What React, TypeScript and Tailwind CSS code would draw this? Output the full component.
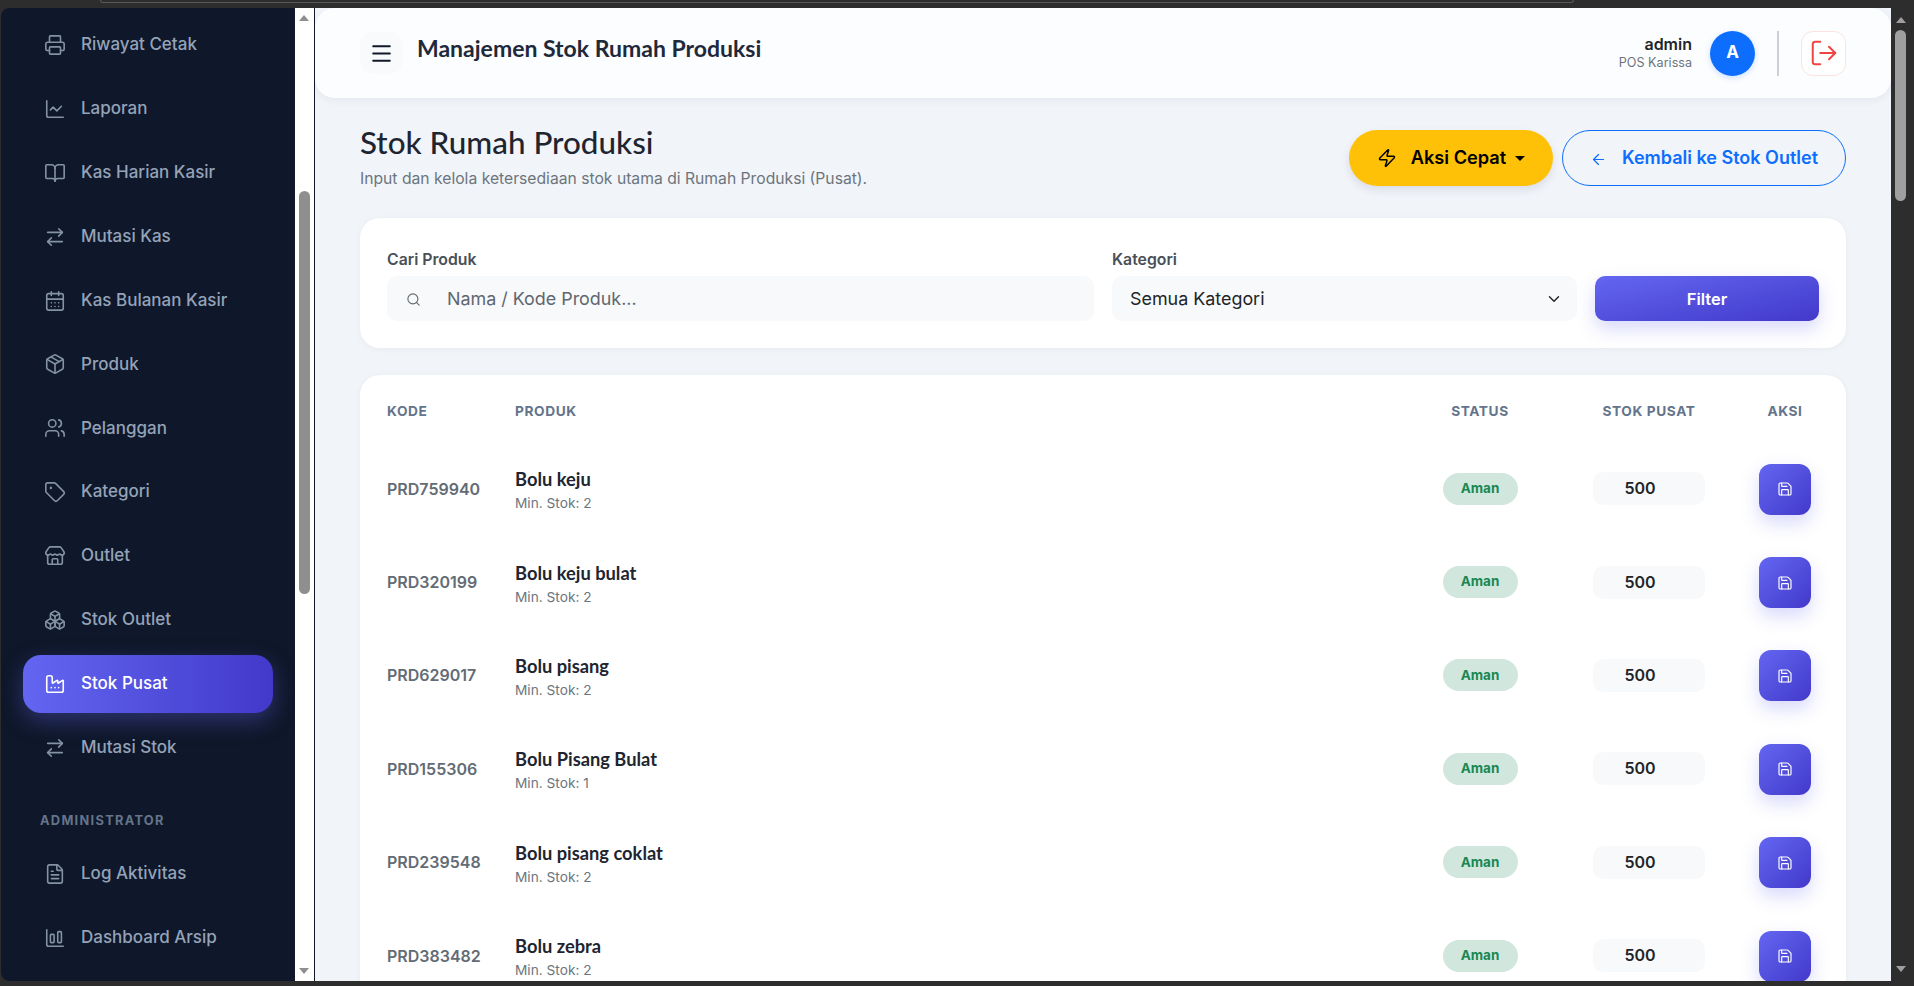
import React from 'react';
import {
  ArrowLeft, ArrowRightLeft, BookOpen, Boxes, CalendarDays, ChartColumnBig, ChartLine, ChevronDown,
  Factory, FileText, LogOut, Menu, Package, Printer, Save, Search, Store, Tag, Users, Zap,
} from 'lucide-react';

const menuUtama = [
  { label: 'Riwayat Cetak', icon: Printer },
  { label: 'Laporan', icon: ChartLine },
  { label: 'Kas Harian Kasir', icon: BookOpen },
  { label: 'Mutasi Kas', icon: ArrowRightLeft },
  { label: 'Kas Bulanan Kasir', icon: CalendarDays },
  { label: 'Produk', icon: Package },
  { label: 'Pelanggan', icon: Users },
  { label: 'Kategori', icon: Tag },
  { label: 'Outlet', icon: Store },
  { label: 'Stok Outlet', icon: Boxes },
  { label: 'Stok Pusat', icon: Factory, active: true },
  { label: 'Mutasi Stok', icon: ArrowRightLeft },
];

const menuAdmin = [
  { label: 'Log Aktivitas', icon: FileText },
  { label: 'Dashboard Arsip', icon: ChartColumnBig },
];

const produk = [
  { kode: 'PRD759940', nama: 'Bolu keju', min: 2 },
  { kode: 'PRD320199', nama: 'Bolu keju bulat', min: 2 },
  { kode: 'PRD629017', nama: 'Bolu pisang', min: 2 },
  { kode: 'PRD155306', nama: 'Bolu Pisang Bulat', min: 1 },
  { kode: 'PRD239548', nama: 'Bolu pisang coklat', min: 2 },
  { kode: 'PRD383482', nama: 'Bolu zebra', min: 2 },
];

const SideItem = ({ label, icon: Icon, active }: { label: string; icon: React.ElementType; active?: boolean }) => (
  <div
    className={`flex h-[58px] items-center gap-[15px] rounded-[18px] pl-[21px] text-[17px] font-medium ${
      active
        ? 'bg-gradient-to-r from-[#6366f1] to-[#4338ca] text-white shadow-[0_8px_22px_rgba(99,102,241,0.35)]'
        : 'text-[#94a3b8]'
    }`}
  >
    <Icon size={22} strokeWidth={1.75} className={active ? 'text-white' : 'text-[#8492a6]'} />
    <span>{label}</span>
  </div>
);

const ArrowUp = ({ color }: { color: string }) => (
  <svg width="10" height="6" viewBox="0 0 10 6" className={color}>
    <path d="M5 0 10 6H0Z" fill="currentColor" />
  </svg>
);

const ArrowDown = ({ color }: { color: string }) => (
  <svg width="10" height="6" viewBox="0 0 10 6" className={color}>
    <path d="M0 0H10L5 6Z" fill="currentColor" />
  </svg>
);

const Sidebar = () => (
  <>
    <aside className="h-full w-[294px] shrink-0 overflow-hidden rounded-l-lg bg-[#0f172a] px-[22px] pt-[8px]">
      <div className="flex flex-col gap-[5.9px]">
        {menuUtama.map((m) => (
          <SideItem key={m.label} {...m} />
        ))}
      </div>
      <div className="flex h-[68px] items-end pb-[15px] pl-[17px] text-[12.8px] font-bold tracking-[1.3px] text-[#64748b]">
        ADMINISTRATOR
      </div>
      <div className="flex flex-col gap-[5.9px]">
        {menuAdmin.map((m) => (
          <SideItem key={m.label} {...m} />
        ))}
      </div>
    </aside>
    <div className="flex h-full w-[20px] shrink-0 flex-col items-center border-r border-[#111827] bg-white">
      <div className="flex h-[16px] items-center justify-center pr-[1px] pt-[4px]">
        <ArrowUp color="text-[#8f8f8f]" />
      </div>
      <div className="mr-[1px] mt-[167px] h-[403px] w-[11px] rounded-full bg-[#8f8f8f]" />
      <div className="flex-1" />
      <div className="flex h-[20px] items-center justify-center pr-[1px]">
        <ArrowDown color="text-[#8f8f8f]" />
      </div>
    </div>
  </>
);

const Header = () => (
  <header className="flex h-[90px] items-center justify-between rounded-[20px] bg-[#fcfdff] pl-[45px] pr-[45px] shadow-[0_2px_8px_rgba(15,23,42,0.06)]">
    <div className="flex items-center gap-[14px]">
      <button className="flex h-[42px] w-[43px] items-center justify-center rounded-[14px] bg-[#f8fafc] text-[#111827]">
        <Menu size={25} strokeWidth={1.8} />
      </button>
      <h1 className="mb-[9px] font-[Lato,sans-serif] text-[23px] font-bold text-[#1e293b]">Manajemen Stok Rumah Produksi</h1>
    </div>
    <div className="flex items-center">
      <div className="text-right">
        <div className="text-[16px] font-semibold leading-[20px] text-[#212529]">admin</div>
        <div className="text-[12.6px] leading-[18px] text-[#6c757d]">POS Karissa</div>
      </div>
      <div className="ml-[18px] flex h-[45px] w-[45px] items-center justify-center rounded-full bg-[#0d6efd] text-[17px] font-bold text-white shadow-[0_2px_6px_rgba(13,110,253,0.2)]">
        A
      </div>
      <div className="ml-[22px] h-[45px] w-[2px] bg-[#cbd0d6]" />
      <button className="ml-[22px] flex h-[45px] w-[45px] items-center justify-center rounded-[12px] border border-[#fde2e2] bg-white text-[#ef4444]">
        <LogOut size={30} strokeWidth={1.6} />
      </button>
    </div>
  </header>
);

const JudulHalaman = () => (
  <div className="mt-[32px] flex h-[56px] items-center justify-between px-[45px]">
    <div>
      <h2 className="-mt-[3px] font-[Lato,sans-serif] text-[31.4px] font-medium leading-[36px] text-[#1e2530]">Stok Rumah Produksi</h2>
      <p className="mt-[9px] text-[15.7px] leading-[20px] text-[#6c757d]">
        Input dan kelola ketersediaan stok utama di Rumah Produksi (Pusat).
      </p>
    </div>
    <div className="flex gap-[9px]">
      <button className="flex h-[56px] w-[204px] items-center justify-center rounded-full bg-[#ffc107] text-[18.2px] font-semibold text-black shadow-[0_4px_10px_rgba(15,23,42,0.1)]">
        <Zap size={20} strokeWidth={1.75} />
        <span className="ml-[14px]">Aksi Cepat</span>
        <span className="ml-[9px] h-0 w-0 border-x-[5px] border-t-[5px] border-x-transparent border-t-black" />
      </button>
      <button className="flex h-[56px] w-[284px] items-center justify-center rounded-full border-[1.5px] border-[#0d6efd] text-[18px] font-semibold text-[#0d6efd]">
        <ArrowLeft size={17} strokeWidth={1.75} className="mt-[2px]" />
        <span className="mb-[1px] ml-[15px]">Kembali ke Stok Outlet</span>
      </button>
    </div>
  </div>
);

const KartuFilter = () => (
  <div className="mx-[45px] mt-[32px] flex h-[130px] items-end gap-[18px] rounded-[20px] bg-white px-[27px] pb-[27px] shadow-[0_1px_6px_rgba(15,23,42,0.05)]">
    <div className="w-[707px]">
      <label className="mb-[6px] block text-[15.8px] font-semibold leading-[20px] text-[#495057]">Cari Produk</label>
      <div className="flex h-[45px] items-center rounded-[10px] bg-[#f8f9fa] pl-[19px] pt-[1px] text-[17.9px] text-[#5f6770]">
        <Search size={15} strokeWidth={1.75} />
        <span className="ml-[26px]">Nama / Kode Produk...</span>
      </div>
    </div>
    <div className="w-[465px]">
      <label className="mb-[6px] block text-[15.8px] font-semibold leading-[20px] text-[#495057]">Kategori</label>
      <div className="flex h-[45px] items-center justify-between rounded-[10px] bg-[#f8f9fa] pl-[18px] pr-[14px] pt-[1px] text-[17.9px] text-[#212529]">
        <span>Semua Kategori</span>
        <ChevronDown size={18} strokeWidth={1.9} />
      </div>
    </div>
    <button className="h-[45px] w-[224px] rounded-[10px] bg-gradient-to-br from-[#6366f1] to-[#4338ca] pt-[1px] text-[16.5px] font-semibold text-white shadow-[0_8px_18px_rgba(99,102,241,0.25)]">
      Filter
    </button>
  </div>
);

const kolom = 'grid grid-cols-[128px_1fr_134px_204px_68px] items-center';

const TabelStok = () => (
  <div className="mx-[45px] mt-[27px] rounded-[20px] bg-white px-[27px] shadow-[0_1px_6px_rgba(15,23,42,0.05)]">
    <div className={`${kolom} h-[67px] pt-[6px] text-[13.7px] font-bold tracking-[0.6px] text-[#64748b]`}>
      <div>KODE</div>
      <div>PRODUK</div>
      <div className="text-center">STATUS</div>
      <div className="text-center">STOK PUSAT</div>
      <div className="text-center">AKSI</div>
    </div>
    {produk.map((p) => (
      <div key={p.kode} className={`${kolom} h-[93.4px]`}>
        <div className="text-[16px] font-semibold text-[#636b74]">{p.kode}</div>
        <div className="pt-[3px]">
          <div className="font-[Lato,sans-serif] text-[18.3px] font-bold leading-[22px] text-[#1e2530]">{p.nama}</div>
          <div className="mt-[4px] text-[13.7px] leading-[18px] text-[#6c757d]">Min. Stok: {p.min}</div>
        </div>
        <div className="flex justify-center">
          <span className="flex h-[32px] w-[75px] items-center justify-center rounded-full bg-[#d1e7dd] pb-[1px] text-[13.5px] font-bold text-[#198754]">
            Aman
          </span>
        </div>
        <div className="flex justify-center">
          <div className="flex h-[33px] w-[112px] items-center justify-center rounded-[10px] bg-[#f8f9fa] pb-[1px] pr-[18px] text-[16px] font-semibold text-[#212529]">
            500
          </div>
        </div>
        <div className="flex justify-center pt-[1px]">
          <button className="flex h-[51px] w-[52px] items-center justify-center rounded-[12px] bg-gradient-to-br from-[#6366f1] to-[#4338ca] text-white shadow-[0_8px_18px_rgba(99,102,241,0.25)]">
            <Save size={16} strokeWidth={1.75} />
          </button>
        </div>
      </div>
    ))}
  </div>
);

export default function App() {
  return (
    <div className="flex h-[986px] w-[1914px] flex-col overflow-hidden bg-[#2d2d2d] font-[Inter,sans-serif]">
      <div className="h-[8px] shrink-0 pl-[100px] pr-[340px]">
        <div className="h-[3px] rounded-b-md border-b border-x border-[#5a5a5a]" />
      </div>
      <div className="ml-[1px] mr-[4px] flex h-[973px] shrink-0 overflow-hidden rounded-t-lg rounded-b-lg">
        <Sidebar />
        <main className="min-w-0 flex-1 overflow-hidden bg-[#f1f4f9]">
          <Header />
          <JudulHalaman />
          <KartuFilter />
          <TabelStok />
        </main>
        <div className="flex h-full w-[19px] shrink-0 flex-col items-center bg-[#2d2d2d]">
          <div className="flex h-[22px] items-center justify-center pt-[2px]">
            <ArrowUp color="text-[#9f9f9f]" />
          </div>
          <div className="h-[171px] w-[11px] rounded-full bg-[#9f9f9f]" />
          <div className="flex-1" />
          <div className="flex h-[24px] items-center justify-center">
            <ArrowDown color="text-[#9f9f9f]" />
          </div>
        </div>
      </div>
    </div>
  );
}
